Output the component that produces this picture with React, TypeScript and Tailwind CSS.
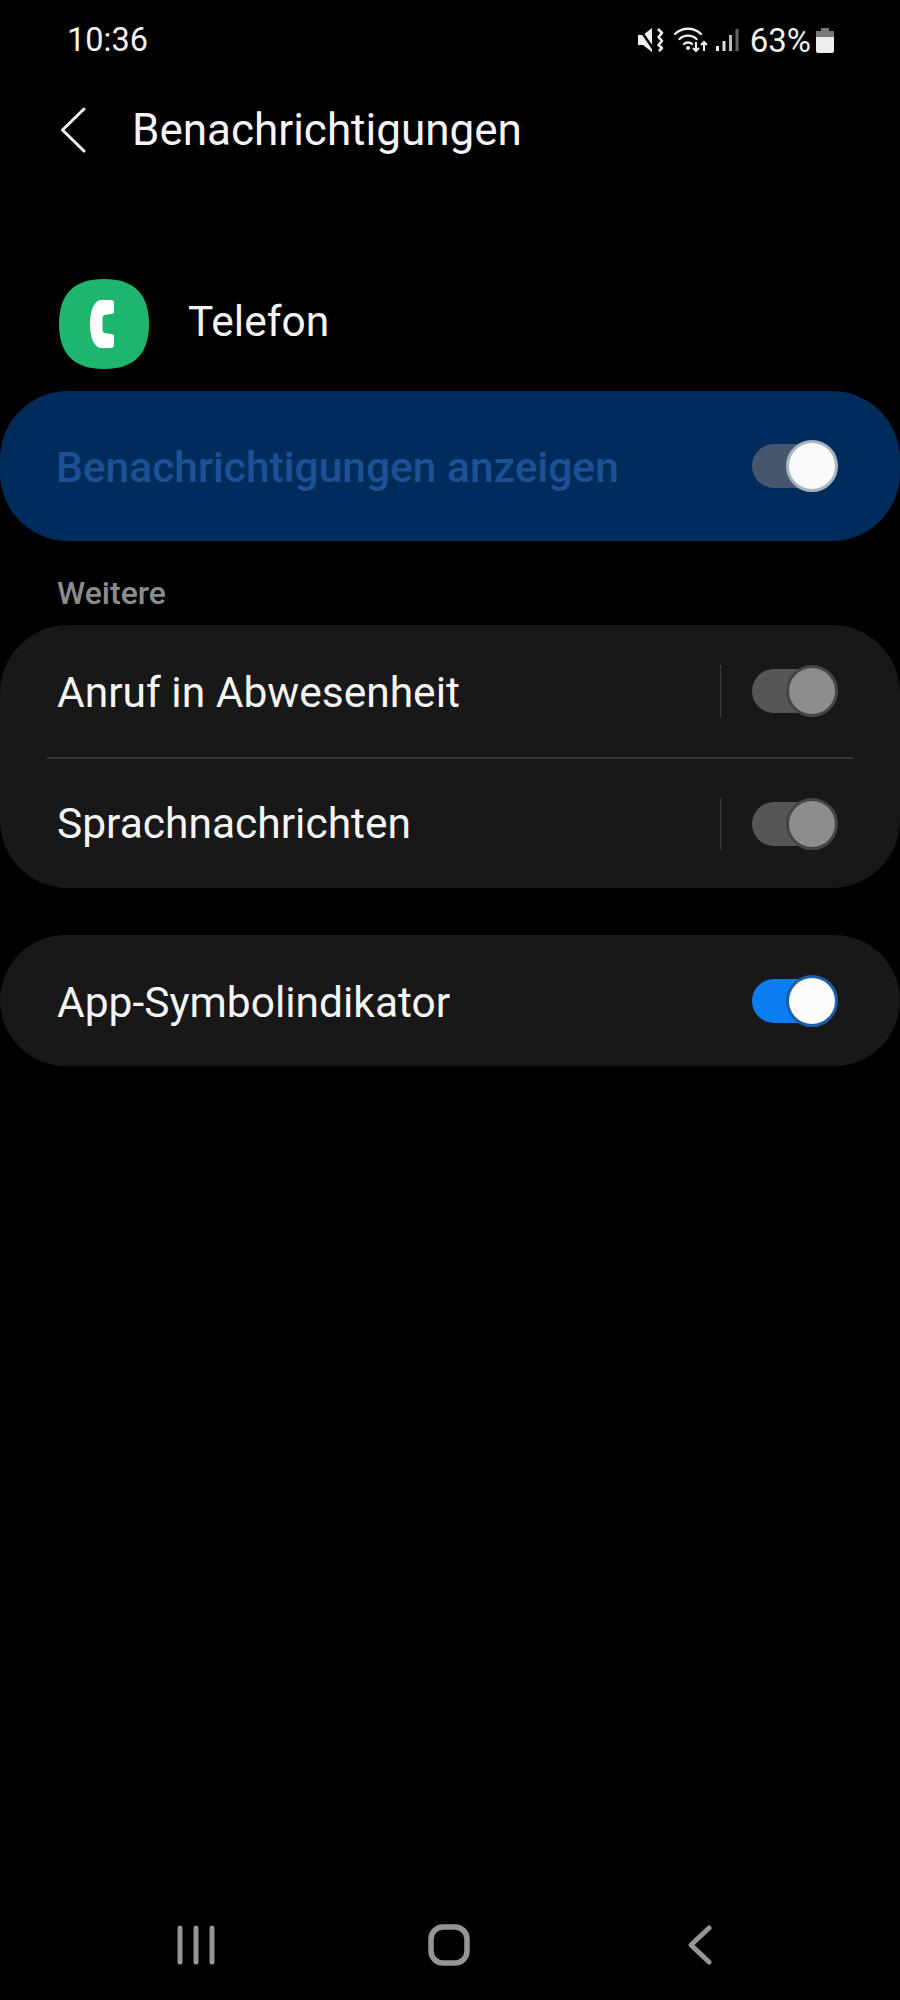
import React from 'react';

interface ToggleProps {
    on: boolean;
    dim?: boolean;
}

const Toggle: React.FC<ToggleProps> = ({ on, dim }) => {
    const track = dim ? 'bg-[#46566c]' : on ? 'bg-[#0b7df2]' : 'bg-[#565656]';
    const knob = dim
        ? 'bg-[#fafafa] border-[#a9b4c2]'
        : on
          ? 'bg-[#fcfcfc] border-[#1a5fa8]'
          : 'bg-[#8d8d8d] border-[#454545]';
    return (
        <div className="relative w-[86px] h-[44px] shrink-0">
            <div className={`w-[80px] h-[44px] rounded-full ${track}`} />
            <div className={`absolute right-0 top-[-4px] w-[52px] h-[52px] rounded-full border-[3px] ${knob}`} />
        </div>
    );
};

const StatusIcons = () => (
    <div className="flex items-center">
        <svg width="26" height="24" viewBox="0 0 26 24" className="mr-[10px]">
            <path d="M0 7h5l9-7v24l-9-7H0z" fill="#eee" />
            <path d="M1 0l15 22" fill="none" stroke="#000" strokeWidth="2.500" />
            <path d="M20 1l4 4-3.500 4 3.500 4-3.500 4 3.500 3-3 3" fill="none" stroke="#eee" strokeWidth="2.600" strokeLinejoin="round" />
        </svg>
        <svg width="35" height="26" viewBox="0 0 35 26" className="mr-[7px]">
            <path d="M1 7c7-7 19-7 26 0M5.500 12c4.500-4.500 12.500-4.500 17 0M10 17c2-2 6-2 8 0" fill="none" stroke="#eee" strokeWidth="2.400" strokeLinecap="round" />
            <circle cx="14" cy="21" r="2" fill="#eee" />
            <path d="M22 15v9m-3-3l3 3 3-3" fill="none" stroke="#eee" strokeWidth="2" />
            <path d="M30 24v-9m-3 3l3-3 3 3" fill="none" stroke="#eee" strokeWidth="2" />
        </svg>
        <svg width="23" height="24" viewBox="0 0 23 24" className="mr-[11px]">
            <rect x="0" y="18" width="3" height="5" fill="#eee" />
            <rect x="6.500" y="13" width="3" height="10" fill="#ddd" />
            <rect x="13" y="7" width="3" height="16" fill="#bbb" />
            <rect x="19.500" y="1" width="3" height="22" fill="#666" />
        </svg>
        <span className="text-[33px] leading-none text-[#f0f0f0]">63%</span>
        <svg width="18" height="25" viewBox="0 0 18 25" className="ml-[5px]">
            <path d="M5 0h8v3h5v6H0V3h5z" fill="#777" />
            <path d="M0 9h18v14a2 2 0 0 1-2 2H2a2 2 0 0 1-2-2z" fill="#eee" />
        </svg>
    </div>
);

const App: React.FC = () => {
    return (
        <div className="w-[900px] h-[2000px] bg-black text-white flex flex-col font-['Roboto',sans-serif]">
            <div className="h-[80px] pl-[67px] pr-[66px] flex items-center justify-between">
                <span className="text-[32.5px] leading-none text-[#f2f2f2]">10:36</span>
                <StatusIcons />
            </div>

            <div className="h-[100px] pl-[60px] flex items-center">
                <svg width="26" height="46" viewBox="0 0 26 46" className="mr-[46px]">
                    <path d="M24 2L2.500 23 24 44" fill="none" stroke="#f2f2f2" strokeWidth="3" strokeLinecap="round" strokeLinejoin="round" />
                </svg>
                <span className="text-[44px] leading-none text-[#f5f5f5]">Benachrichtigungen</span>
            </div>

            <div className="mt-[99px] h-[90px] pl-[59px] flex items-center">
                <svg width="90" height="90" viewBox="0 0 90 90" className="mr-[39px]">
                    <path d="M45 0C75 0 90 15 90 45S75 90 45 90 0 75 0 45 15 0 45 0z" fill="#1eb56e" />
                    <path d="M42 21h10a3 3 0 0 1 3 3v8a3 3 0 0 1-3 3l-7 1c-1 1-1.500 2-1.500 3v12c0 1 .5 2 1.500 3l7 1a3 3 0 0 1 3 3v8a3 3 0 0 1-3 3H42c-6 0-11-9-11-24s5-24 11-24z" fill="#fdfdfd" />
                </svg>
                <span className="text-[42.5px] leading-none text-[#f5f5f5] pb-[4px]">Telefon</span>
            </div>

            <div className="mt-[22px] h-[150px] rounded-[68px] bg-[#002c5c] pl-[56px] pr-[62px] flex items-center justify-between">
                <span className="text-[42.5px] leading-none font-medium text-[#1d5196] pt-[4px]">Benachrichtigungen anzeigen</span>
                <Toggle on dim />
            </div>

            <div className="mt-[36px] h-[32px] pl-[57px] flex items-center">
                <span className="text-[32px] leading-none font-medium text-[#8c8c8c]">Weitere</span>
            </div>

            <div className="mt-[16px] h-[263px] rounded-[68px] bg-[#181818] flex flex-col">
                <div className="h-[132px] pl-[57px] pr-[62px] flex items-center">
                    <span className="flex-1 text-[42.5px] leading-none text-[#f5f5f5] pt-[4px]">Anruf in Abwesenheit</span>
                    <div className="w-px h-[52px] bg-[#3d3d3d] mr-[31px]" />
                    <Toggle on={false} />
                </div>
                <div className="mx-[47px] h-[2px] bg-[#353535]" />
                <div className="flex-1 pl-[57px] pr-[62px] flex items-center">
                    <span className="flex-1 text-[42.5px] leading-none text-[#f5f5f5] pt-[2px]">Sprachnachrichten</span>
                    <div className="w-px h-[52px] bg-[#3d3d3d] mr-[31px]" />
                    <Toggle on={false} />
                </div>
            </div>

            <div className="mt-[47px] h-[131px] rounded-[68px] bg-[#181818] pl-[57px] pr-[62px] flex items-center justify-between">
                <span className="text-[42.5px] leading-none text-[#f5f5f5] pt-[5px]">App-Symbolindikator</span>
                <Toggle on />
            </div>

            <div className="mt-auto mb-[34px] h-[42px] pl-[176px] flex items-center">
                <svg width="40" height="40" viewBox="0 0 40 40" className="mr-[212px]">
                    <path d="M4 3v34M20 3v34M36 3v34" fill="none" stroke="#959595" strokeWidth="5" strokeLinecap="round" />
                </svg>
                <svg width="42" height="42" viewBox="0 0 42 42" className="mr-[218px]">
                    <rect x="3" y="3" width="36" height="36" rx="12" fill="none" stroke="#959595" strokeWidth="5.500" />
                </svg>
                <svg width="24" height="40" viewBox="0 0 24 40">
                    <path d="M21 3L3 20l18 17" fill="none" stroke="#959595" strokeWidth="5" strokeLinecap="round" strokeLinejoin="round" />
                </svg>
            </div>
        </div>
    );
};

export default App;
